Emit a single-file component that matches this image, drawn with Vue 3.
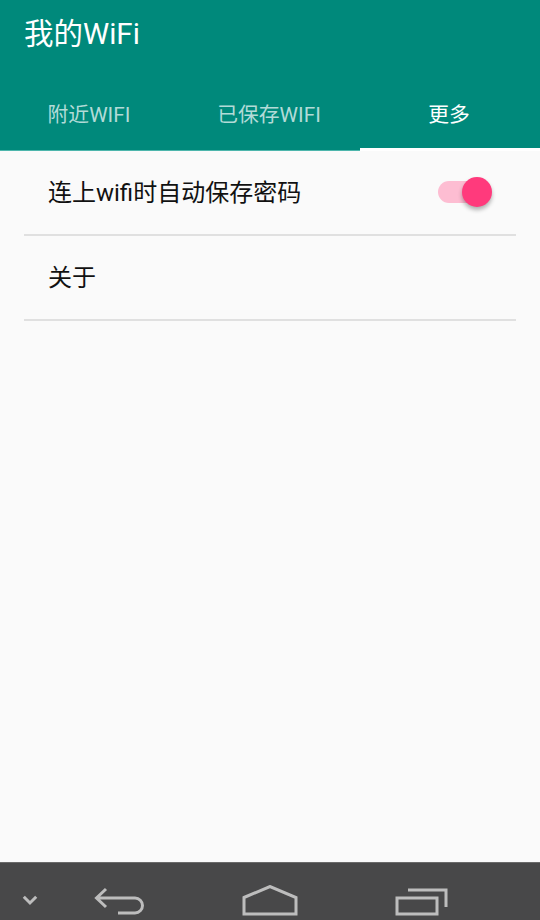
<script setup>
const tabs = [
  { label: '附近WIFI', active: false },
  { label: '已保存WIFI', active: false },
  { label: '更多', active: true },
]
</script>

<template>
  <div class="screen">
    <header class="appbar">
      <h1 class="title">我的WiFi</h1>
      <nav class="tabs">
        <div
          v-for="tab in tabs"
          :key="tab.label"
          class="tab"
          :class="{ active: tab.active }"
        >
          {{ tab.label }}
        </div>
      </nav>
    </header>

    <main class="list">
      <div class="row">
        <span>连上wifi时自动保存密码</span>
        <div class="switch">
          <div class="track"></div>
          <div class="thumb"></div>
        </div>
      </div>
      <div class="row">
        <span>关于</span>
      </div>
    </main>

    <footer class="navbar">
      <svg class="nav-icon chevron" width="18" height="16" viewBox="0 0 18 16">
        <path d="M2.8 3.8 L9 10 L15.2 3.8" />
      </svg>
      <svg class="nav-icon back" width="54" height="34" viewBox="0 0 54 34">
        <path d="M12 4 L2.5 13 L12 22 M2.5 13 H41 A7.5 7.5 0 0 1 41 28 H24" />
      </svg>
      <svg class="nav-icon home" width="58" height="34" viewBox="0 0 58 34">
        <path d="M3 12.5 L29 1.5 L55 12.5 V29 H3 Z" />
      </svg>
      <svg class="nav-icon recent" width="54" height="34" viewBox="0 0 54 34">
        <path d="M2 13 H42 V29 H2 Z M13 5 H51 V22" />
      </svg>
    </footer>
  </div>
</template>

<style>
html, body {
  margin: 0;
  background: #fafafa;
}
</style>

<style scoped>
.screen {
  width: 540px;
  height: 920px;
  display: flex;
  flex-direction: column;
  overflow: hidden;
  background: #fafafa;
  font-family: "Roboto", "Noto Sans CJK SC", sans-serif;
}

.appbar {
  background: #00897b;
  color: #fff;
}

.title {
  margin: 0;
  height: 67px;
  padding-left: 24px;
  font-size: 29.5px;
  font-weight: 400;
  line-height: 68px;
}

.tabs {
  display: grid;
  grid-template-columns: repeat(3, 180px);
}

.tab {
  height: 84px;
  box-sizing: border-box;
  padding: 12px 2px 0 0;
  text-align: center;
  font-size: 20.8px;
  line-height: 73px;
  color: #b2dbd7;
  border-bottom: 1px solid #4db6ac;
}

.tab.active {
  color: #fff;
  border-bottom: 3px solid #fff;
}

.list {
  flex: 1;
  padding: 0 24px;
}

.row {
  height: 85px;
  box-sizing: border-box;
  padding: 0 24px 5px;
  display: flex;
  align-items: center;
  justify-content: space-between;
  border-bottom: 2px solid #e0e0e0;
  font-size: 24px;
  color: #111;
}

.switch {
  position: relative;
  width: 54px;
  height: 30px;
  margin-top: 3px;
}

.track {
  position: absolute;
  top: 4px;
  left: 0;
  width: 48px;
  height: 22px;
  border-radius: 11px;
  background: #fdbdd2;
}

.thumb {
  position: absolute;
  top: 0;
  right: 0;
  width: 30px;
  height: 30px;
  border-radius: 50%;
  background: #ff3a7c;
  box-shadow: 0 3px 4px rgba(0, 0, 0, 0.3);
}

.navbar {
  height: 58px;
  box-sizing: border-box;
  flex-shrink: 0;
  background: #484849;
  border-top: 1px solid #6a6a6a;
  display: flex;
  align-items: flex-start;
}

.nav-icon {
  fill: none;
  stroke: #bdbdbd;
  stroke-width: 3;
  margin-top: 22px;
}

.chevron {
  margin-left: 21px;
  margin-top: 30px;
}

.back {
  margin-left: 55px;
}

.home {
  margin-left: 93px;
}

.recent {
  margin-left: 96px;
}
</style>
